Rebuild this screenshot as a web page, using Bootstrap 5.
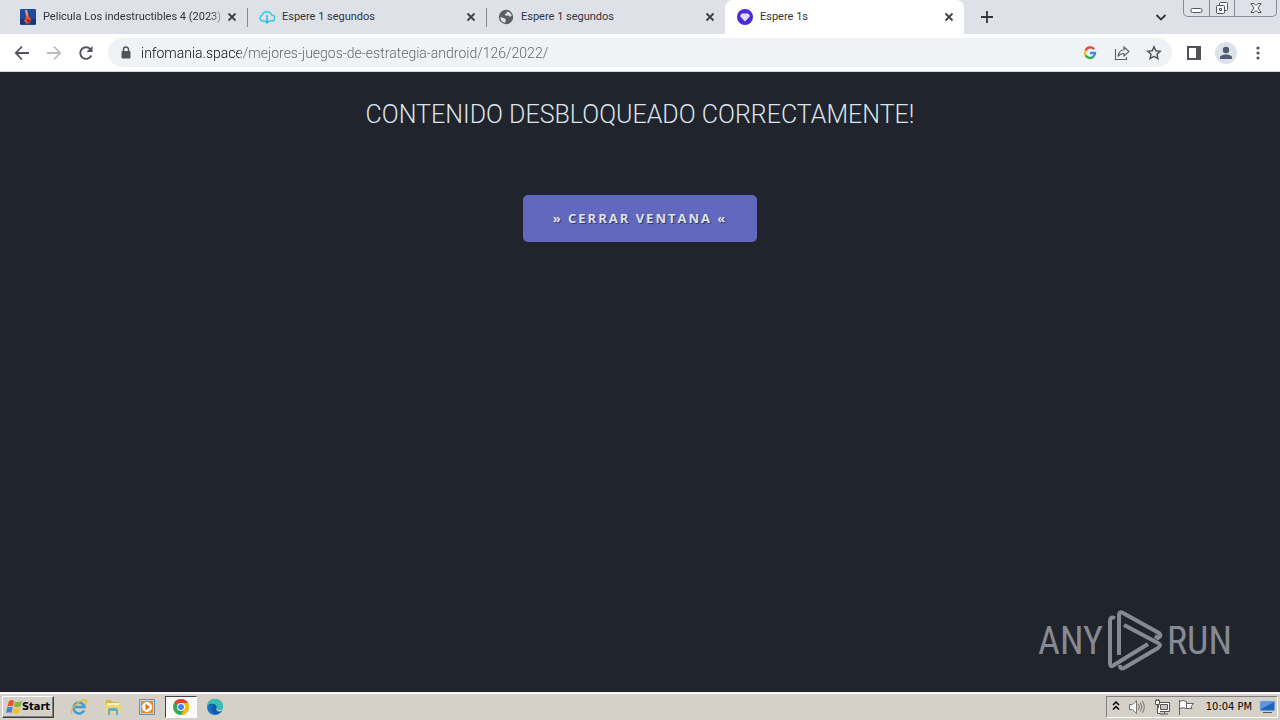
<!DOCTYPE html>
<html lang="es">
<head>
<meta charset="utf-8">
<meta name="viewport" content="width=device-width, initial-scale=1">
<title>Espere 1s</title>
<link href="https://cdn.jsdelivr.net/npm/bootstrap@5.3.0/dist/css/bootstrap.min.css" rel="stylesheet">
<style>
  body { background: #20242d; font-family: "DejaVu Sans Condensed", "Noto Sans", sans-serif; font-size: 11px; line-height: 16px; color: #30343a; }
  svg { display: block; flex: none; }
  button { border: 0; padding: 0; background: none; color: inherit; }
  .tab-strip { height: 34px; background: #dee1e8; padding-left: 8px; }
  .browser-tab { flex: 0 1 239px; height: 34px; padding: 0 10px 0 12px; min-width: 60px; position: relative; }
  .browser-tab + .browser-tab:not(.current)::before { content: ""; position: absolute; left: 0; top: 8px; height: 19px; border-left: 1px solid #85888e; }
  .browser-tab.current { background: #fff; border-radius: 8px 8px 0 0; }
  .tab-title { min-width: 0; margin-left: 7px; white-space: nowrap; overflow: hidden; text-align: left; font-family: Roboto, sans-serif; line-height: 18px; }
  .fade-end { -webkit-mask-image: linear-gradient(to left, transparent, #000 16px); mask-image: linear-gradient(to left, transparent, #000 16px); }
  .new-tab { margin-left: 17px; }
  .win-buttons { height: 17px; border: 1px solid #878b93; border-top: 0; border-radius: 0 0 5px 5px; margin-right: 3px; }
  .win-buttons button { width: 25px; height: 16px; display: flex; align-items: center; justify-content: center; }
  .win-buttons button + button { border-left: 1px solid #878b93; }
  .win-buttons button:last-child { width: 42px; }
  .toolbar { height: 38px; background: #fff; border-bottom: 1px solid #d5d7da; padding: 0 16px 0 14px; }
  .omnibox { height: 29px; border-radius: 15px; background: #f0f3f5; padding: 0 10px; margin: 0 15px 0 14px; }
  .omnibox input { border: 0; outline: 0; padding: 0; min-width: 0; height: 24px; margin-left: 7px; font-family: Roboto, sans-serif; font-weight: 300; font-size: 14px; color: transparent; background: linear-gradient(to right, #0c0d10 98px, #5c6166 98px); -webkit-background-clip: text; background-clip: text; }
  .avatar { width: 22px; height: 22px; border-radius: 50%; background: #dde1e8; margin: 0 15px 0 14px; }
  main { padding-top: 27px; }
  main h1 { font-family: Roboto, sans-serif; font-weight: 300; font-size: 25px; line-height: 32px; color: #dfe3ea; margin-bottom: 64px; }
  .close-cta { font-family: "Open Sans", sans-serif; font-weight: 700; font-size: 13px; line-height: 21px; letter-spacing: 2px; padding: 13px 30px; color: #dfe2ec; background: #6268bd; border-radius: 5px; text-shadow: 1px 1px 1px #30345f; }
  .watermark { color: #868990; font-family: "Liberation Sans Narrow", "Roboto Condensed", sans-serif; font-size: 38px; line-height: 62px; padding: 0 48px 20px 0; gap: 4px; }
  .taskbar { height: 28px; background: #d5d0c8; border-top: 1px solid #f5f4f1; box-shadow: inset 0 1px #fff; padding: 3px 2px 2px; color: #000; }
  .start { width: 52px; height: 22px; border: 1px solid; border-color: #fff #404040 #404040 #fff; box-shadow: inset -1px -1px #808080; font-weight: 700; }
  .task { width: 34px; height: 22px; display: flex; align-items: center; justify-content: center; }
  .task.pressed { background: #fbfaf8; width: 32px; border: 1px solid; border-color: #404040 #fff #fff #404040; margin: 0 1px; }
  .tray { height: 22px; border: 1px solid; border-color: #808080 #fff #fff #808080; padding: 0 1px 0 5px; }
  .tray time { margin: 0 7px 0 12px; white-space: nowrap; }
</style>
</head>
<body class="d-flex flex-column min-vh-100">
<svg width="0" height="0" class="position-absolute" aria-hidden="true">
  <symbol id="x" viewBox="0 0 10 10"><path d="M1.500 1.500l7 7m0-7l-7 7" stroke="#3d4046" stroke-width="1.800" fill="none"/></symbol>
</svg>

<header>
  <div class="tab-strip d-flex">
    <nav class="d-flex flex-grow-1" aria-label="Tabs">
      <div class="browser-tab d-flex align-items-center">
        <svg width="16" height="16" viewBox="0 0 16 16"><rect width="16" height="16" rx="1" fill="#1d4a9c"/><path d="M0 10h16v5H0z" fill="#173877"/><path d="M5 1l2 0 2 7 2 2-1 4-3 1-3-3 2-3z" fill="#e4572e"/><path d="M5 1h2l1 5-1 2z" fill="#e9a184"/><path d="M7 10l3 1-1 3-2-1z" fill="#a51f17"/></svg>
        <button class="tab-title fade-end flex-grow-1">Pelicula Los indestructibles 4 (2023)</button>
        <button aria-label="Cerrar"><svg width="10" height="10"><use href="#x"/></svg></button>
      </div>
      <div class="browser-tab d-flex align-items-center">
        <svg width="16" height="16" viewBox="0 0 16 16" fill="none" stroke="#2fd0dc" stroke-width="1.500"><path d="M5 12H3.500a3 3 0 0 1-.3-5.800A5 5 0 0 1 12.700 6a3 3 0 0 1 0 6H11"/><path d="M8 6v8M5.500 11.500L8 14l2.500-2.500" stroke="#35b4e0"/></svg>
        <button class="tab-title flex-grow-1">Espere 1 segundos</button>
        <button aria-label="Cerrar"><svg width="10" height="10"><use href="#x"/></svg></button>
      </div>
      <div class="browser-tab d-flex align-items-center">
        <svg width="16" height="16" viewBox="0 0 16 16"><circle cx="8" cy="8" r="7.200" fill="#5a5e64"/><path d="M8.500 2.500c3 .3 4.800 2 5.300 4.500l-2 .8-1.500-1.300-2.800.2L7 5l2-1zM2.500 8l4 1.200L8 11l-1 2.800C4 13.500 2 11 2.500 8z" fill="#dee1e8"/></svg>
        <button class="tab-title flex-grow-1">Espere 1 segundos</button>
        <button aria-label="Cerrar"><svg width="10" height="10"><use href="#x"/></svg></button>
      </div>
      <div class="browser-tab current d-flex align-items-center">
        <svg width="16" height="16" viewBox="0 0 16 16"><circle cx="8" cy="8" r="8" fill="#4c2bd6"/><path d="M5 4.500h6L13 7l-5 5.500L3 7z" fill="#f1edff"/><path d="M3 7h10M6 7l2 5 2-5-2-2z" fill="none" stroke="#c3b4f5" stroke-width=".5"/></svg>
        <button class="tab-title flex-grow-1">Espere 1s</button>
        <button aria-label="Cerrar"><svg width="10" height="10"><use href="#x"/></svg></button>
      </div>
      <button class="new-tab" aria-label="Nueva pestaña"><svg width="12" height="12" viewBox="0 0 12 12"><path d="M6 0v12M0 6h12" stroke="#33363c" stroke-width="1.800"/></svg></button>
    </nav>
    <button class="me-3" aria-label="Buscar pestañas"><svg width="12" height="12" viewBox="0 0 12 12"><path d="M1.500 4L6 8.500 10.500 4" fill="none" stroke="#33363c" stroke-width="1.800"/></svg></button>
    <div class="win-buttons d-flex">
      <button aria-label="Minimizar"><svg width="13" height="12" viewBox="0 0 13 12"><rect x="1" y="6.500" width="11" height="4" rx="1.500" fill="#fff" stroke="#53565e"/></svg></button>
      <button aria-label="Restaurar"><svg width="14" height="14" viewBox="0 0 14 14" fill="#f4f5f7" stroke="#53565e"><rect x="4.500" y="1.500" width="8" height="8" rx="1"/><rect x="1.500" y="4.500" width="8" height="8" rx="1"/><path d="M4.500 7.500h2v2h-2z"/></svg></button>
      <button aria-label="Cerrar ventana"><svg width="12" height="12" viewBox="0 0 12 12"><path d="M1 1.500h3l2 2 2-2h3L8 6l3 4.500H8l-2-2-2 2H1L4 6z" fill="#f4f5f7" stroke="#53565e"/></svg></button>
    </div>
  </div>

  <div class="toolbar d-flex align-items-center">
    <button aria-label="Atrás"><svg width="16" height="16" viewBox="0 0 16 16"><path d="M15 8H2M8 1.500L1.800 8 8 14.500" fill="none" stroke="#505358" stroke-width="1.800"/></svg></button>
    <button class="ms-3" aria-label="Adelante"><svg width="16" height="16" viewBox="0 0 16 16"><path d="M1 8h13M8 1.500L14.200 8 8 14.500" fill="none" stroke="#b9bbbe" stroke-width="1.800"/></svg></button>
    <button class="ms-3" aria-label="Recargar"><svg width="16" height="16" viewBox="0 0 16 16"><path d="M13.300 10.500A5.800 5.800 0 1 1 12.200 4" fill="none" stroke="#505358" stroke-width="1.900"/><path d="M14.500 1v6h-6z" fill="#505358"/></svg></button>
    <div class="omnibox d-flex align-items-center flex-grow-1">
      <svg width="16" height="16" viewBox="0 0 16 16"><rect x="3.500" y="6" width="9" height="7.500" rx="1" fill="#505358"/><path d="M5.500 7V4.600a2.500 2.500 0 0 1 5 0V7" fill="none" stroke="#505358" stroke-width="1.500"/></svg>
      <input class="flex-grow-1" type="text" aria-label="Dirección" value="infomania.space/mejores-juegos-de-estrategia-android/126/2022/">
      <button aria-label="Google"><svg width="16" height="16" viewBox="0 0 16 16" fill="none" stroke-width="2.300"><path d="M12.200 4.200A5 5 0 0 0 3.600 5.700" stroke="#ea4335"/><path d="M3.600 5.700a5 5 0 0 0 0 4.600" stroke="#fbbc05"/><path d="M3.600 10.300A5 5 0 0 0 11.400 11.700" stroke="#34a853"/><path d="M8 8h5a5 5 0 0 1-1.600 3.700" stroke="#4285f4"/></svg></button>
      <button class="ms-3" aria-label="Compartir"><svg width="16" height="16" viewBox="0 0 16 16" fill="none" stroke="#5a5e64" stroke-width="1.100"><path d="M1.500 4v10.500h11V12"/><path d="M10 2l5 4.500-5 4.500V8.500c-3 0-4.500 1-6 3C4.500 8 6.500 5 10 4.700z"/></svg></button>
      <button class="ms-3" aria-label="Favorito"><svg width="16" height="16" viewBox="0 0 16 16"><path d="M8 1.800l1.800 4 4.400.5-3.200 3 .9 4.300L8 11.400l-3.900 2.200.9-4.300-3.200-3 4.400-.5z" fill="none" stroke="#505358" stroke-width="1.500"/></svg></button>
    </div>
    <button aria-label="Panel lateral"><svg width="14" height="14" viewBox="0 0 14 14"><path d="M1 1h12v12H1z" fill="none" stroke="#505358" stroke-width="2"/><path d="M9 1h4v12H9z" fill="#505358"/></svg></button>
    <button class="avatar d-flex align-items-center justify-content-center" aria-label="Perfil"><svg width="14" height="14" viewBox="0 0 14 14" fill="#505a70"><circle cx="7" cy="4" r="3.200"/><path d="M1 13V11.500C1 9.500 4 8.500 7 8.500s6 1 6 3V13z"/></svg></button>
    <button aria-label="Menú"><svg width="12" height="16" viewBox="0 0 12 16" fill="#505358"><circle cx="6" cy="3" r="1.600"/><circle cx="6" cy="8" r="1.600"/><circle cx="6" cy="13" r="1.600"/></svg></button>
  </div>
</header>

<main class="flex-grow-1 d-flex flex-column align-items-center text-center">
  <h1>CONTENIDO DESBLOQUEADO CORRECTAMENTE!</h1>
  <button class="close-cta">» CERRAR VENTANA «</button>
  <div class="watermark d-flex align-items-center align-self-end mt-auto">
    <span>ANY</span>
    <svg width="56" height="62" viewBox="1 0 56 62" fill="none" stroke="#868990" stroke-width="4" stroke-linejoin="round"><path d="M9 8Q4 6 4 11V53Q4 58 8 55L42 34"/><path d="M13 45V5Q13 1 17 3L53 23Q56 26 52 28L49 26"/><path d="M18 15L52 33Q56 35 52 38L18 58Q14 60 14 55"/></svg>
    <span>RUN</span>
  </div>
</main>

<footer class="taskbar d-flex align-items-center">
  <button class="start d-flex align-items-center justify-content-center">
    <svg width="16" height="16" viewBox="0 0 16 16"><path d="M3 2q3-2 5 0L7 7.500Q5 6 1.500 7.500z" fill="#e8552b"/><path d="M9 2.500q3 1.500 7-.5L14.500 7.500q-3 1.500-6.500 0z" fill="#7dba3c"/><path d="M1.200 8.500q3-1.500 5.500 0L5.500 14Q3.500 12.500 0 14z" fill="#3e83d6"/><path d="M7.700 8.700q3 1.300 6.500 0L12.800 14q-3 1.500-6.500 0z" fill="#f6bf2c"/></svg>
    <span>Start</span>
  </button>
  <button class="task ms-2" aria-label="Internet Explorer"><svg width="18" height="18" viewBox="0 0 18 18" fill="none"><path d="M14 12.500A5.500 5.500 0 1 1 14.500 9H5" stroke="#3a9edb" stroke-width="2.600"/><path d="M2 15.500C-1 12 9 2 15 2c3 .5 1 4 0 5" stroke="#e9b93a" stroke-width="1.400"/></svg></button>
  <button class="task" aria-label="Explorador"><svg width="18" height="18" viewBox="0 0 18 18"><path d="M2 2h5l1 2h7v10H2z" fill="#d9b64c"/><path d="M3 5h12v3H3z" fill="#fff3b5"/><path d="M1 7h16l-1 8H2z" fill="#f3d774"/><path d="M4 17v-5q0-2 2-2h6q2 0 2 2v5h-2v-4H6v4z" fill="#5aaedd"/></svg></button>
  <button class="task" aria-label="Reproductor"><svg width="18" height="18" viewBox="0 0 18 18"><path d="M1.500 1.500h15v15h-15z" fill="#b9d7ee" stroke="#5c92bd"/><path d="M3 3h12v12H3z" fill="#ef8a1d"/><circle cx="9" cy="9" r="5" fill="#fff"/><path d="M7.500 5.800l4.500 3.200-4.500 3.200z" fill="#e0700f"/></svg></button>
  <button class="task pressed" aria-label="Chrome"><svg width="16" height="16" viewBox="0 0 16 16"><circle cx="8" cy="8" r="8" fill="#34a853"/><path d="M8 8L1.100 4A8 8 0 0 1 15 4z" fill="#ea4335"/><path d="M8 8V4h7a8 8 0 0 1-7 12l3.500-6z" fill="#fbbc05"/><circle cx="8" cy="8" r="4" fill="#fff"/><circle cx="8" cy="8" r="3" fill="#4285f4"/></svg></button>
  <button class="task" aria-label="Edge"><svg width="18" height="18" viewBox="0 0 18 18"><circle cx="9" cy="9" r="8" fill="#1475c4"/><path d="M1 9C1 4 5 1 9 1c5 0 8 3.500 8 7 0 3-2.500 4-5 4-1.500 0-1.500-.7-1-1.500C11 7 5 4.500 1 9z" fill="#37bfb1"/><path d="M1.500 7.500C5 4.500 11 6 10.500 9c-1 1-1 3 1.500 3.500 2 .5 4-.5 4.300-.5C12 18.500 5 16 5.500 11c0-2 1-3 2-3.500-2-.8-5 .2-6 0z" fill="#0d5aa7"/><path d="M11 9.500c-.7 1.500-.5 2.500 1.500 2.700 1.500 0 3-.5 4-1.700l.3 1.500-3 1.500c-3 0-4.500-2-2.800-4z" fill="#d5d0c8"/></svg></button>

  <div class="tray d-flex align-items-center ms-auto">
    <button aria-label="Mostrar iconos ocultos"><svg width="8" height="12" viewBox="0 0 8 12"><path d="M1 4l3-3 3 3M1 8.500l3-3 3 3" fill="none" stroke="#000" stroke-width="1.500"/></svg></button>
    <button class="ms-2" aria-label="Volumen"><svg width="18" height="16" viewBox="0 0 18 16" fill="none" stroke="#77756f"><path d="M1.500 5.500h3l4-4v13l-4-4h-3z" fill="#fff"/><path d="M10.500 5q1.500 3 0 6M12.500 3.500q2.500 4.500 0 9M14.500 2q3.500 6 0 12"/></svg></button>
    <button class="ms-2" aria-label="Red"><svg width="16" height="16" viewBox="0 0 16 16" stroke="#55534f" fill="#fff"><path d="M4.500 3.500h11v9h-11z"/><path d="M6.500 5.500h7v5h-7z" fill="#c9c6bf"/><path d="M6 15h8M10.500 12.500v2"/><path d="M1.500 1.500h4v4h-4zM3.500 6v8.500h3"/><path d="M2.500 0v1.500M4.500 0v1.500"/></svg></button>
    <button class="ms-2" aria-label="Centro de actividades"><svg width="16" height="16" viewBox="0 0 16 16" fill="#fff" stroke="#66645f"><path d="M1.500 1v15M1.500 2.500q4-2 7 0v7q-3-1.500-7 0zM8.500 4.500h7l-2.500 3 1 2h-5.500z"/></svg></button>
    <time>10:04 PM</time>
    <button aria-label="Mostrar escritorio"><svg width="17" height="14" viewBox="0 0 17 14"><path d="M1 1h15v10H1z" fill="#2166be" stroke="#b8cfe5"/><path d="M2 2h13L2 9z" fill="#5b99dc"/><path d="M4 12.500h9" stroke="#555"/></svg></button>
  </div>
</footer>
<script src="https://cdn.jsdelivr.net/npm/bootstrap@5.3.0/dist/js/bootstrap.bundle.min.js"></script>
</body>
</html>
